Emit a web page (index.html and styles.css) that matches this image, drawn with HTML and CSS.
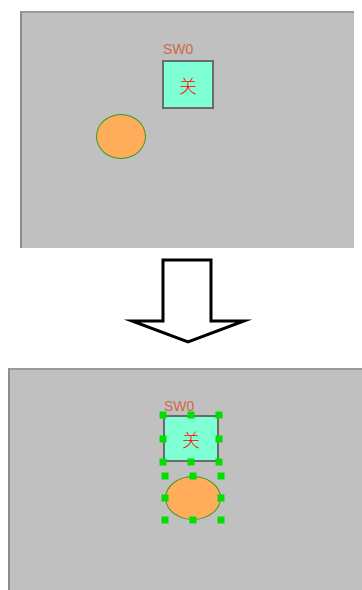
FILE: index.html
```html
<!DOCTYPE html>
<html lang="zh">
<head>
<meta charset="utf-8">
<title>Canvas selection</title>
<link rel="stylesheet" href="styles.css">
</head>
<body>
<div class="canvas canvas-top">
  <div class="label label-top">SW0</div>
  <div class="switch switch-top"><span>关</span></div>
  <div class="ellipse ellipse-top"></div>
</div>
<svg class="arrow" viewBox="0 248 362 120" width="362" height="120" aria-hidden="true">
  <polygon points="163,260 211,260 211,321 244,321 188,342 132,321 163,321" fill="#fff" stroke="#000" stroke-width="3" stroke-linejoin="miter" stroke-miterlimit="12"/>
</svg>
<div class="canvas canvas-bottom">
  <div class="label label-bottom">SW0</div>
  <div class="sel sel-switch">
    <div class="switch"><span>关</span></div>
    <i class="h tl"></i><i class="h tc"></i><i class="h tr"></i>
    <i class="h ml"></i><i class="h mr"></i>
    <i class="h bl"></i><i class="h bc"></i><i class="h br"></i>
  </div>
  <div class="sel sel-ellipse">
    <div class="ellipse"></div>
    <i class="h tl"></i><i class="h tc"></i><i class="h tr"></i>
    <i class="h ml"></i><i class="h mr"></i>
    <i class="h bl"></i><i class="h bc"></i><i class="h br"></i>
  </div>
</div>
</body>
</html>
```
FILE: styles.css
```css
html, body {
  margin: 0;
  padding: 0;
  background: #ffffff;
  overflow: hidden;
}
body {
  width: 362px;
  height: 590px;
  display: flex;
  flex-direction: column;
  font-family: "Liberation Sans", Arial, sans-serif;
}
.canvas {
  position: relative;
  box-sizing: border-box;
  background: #c0c0c0;
  border-top: 2px solid #9a9a9a;
  border-left: 2px solid #8c8c8c;
  flex: none;
}
.canvas-top {
  margin: 11px 0 0 20px;
  width: 334px;
  height: 237px;
}
.canvas-bottom {
  margin: 0 0 0 8px;
  width: 354px;
  height: 222px;
}
.arrow {
  display: block;
  flex: none;
}
.label {
  position: absolute;
  font-size: 14px;
  line-height: 14px;
  color: #d06848;
  letter-spacing: 0;
}
.label-top { left: 141px; top: 29px; }
.label-bottom { left: 154px; top: 29px; }

.switch {
  position: absolute;
  box-sizing: border-box;
  background: #7fffd4;
  border: 2px solid #6b6b6b;
  display: flex;
  align-items: center;
  justify-content: center;
}
.switch span {
  font-family: "Noto Sans CJK SC", sans-serif;
  font-weight: 300;
  font-size: 18px;
  line-height: 1;
  color: #ff0000;
}
.switch-top { left: 140px; top: 47px; width: 52px; height: 49px; }

.ellipse {
  position: absolute;
  box-sizing: border-box;
  background: #ffad5b;
  border: 1px solid #3a9a20;
  border-radius: 50%;
}
.ellipse-top { left: 74px; top: 101px; width: 50px; height: 45px; }

.sel {
  position: absolute;
}
.sel > .switch,
.sel > .ellipse {
  left: 0; top: 0; width: 100%; height: 100%;
}
.sel-switch { left: 153px; top: 45px; width: 56px; height: 47px; }
.sel-ellipse { left: 155px; top: 106px; width: 56px; height: 44px; }

.h {
  position: absolute;
  width: 7px;
  height: 7px;
  background: #00e000;
  transform: translate(-50%, -50%);
}
.tl { left: 0; top: 0; }
.tc { left: 50%; top: 0; }
.tr { left: 100%; top: 0; }
.ml { left: 0; top: 50%; }
.mr { left: 100%; top: 50%; }
.bl { left: 0; top: 100%; }
.bc { left: 50%; top: 100%; }
.br { left: 100%; top: 100%; }
```
